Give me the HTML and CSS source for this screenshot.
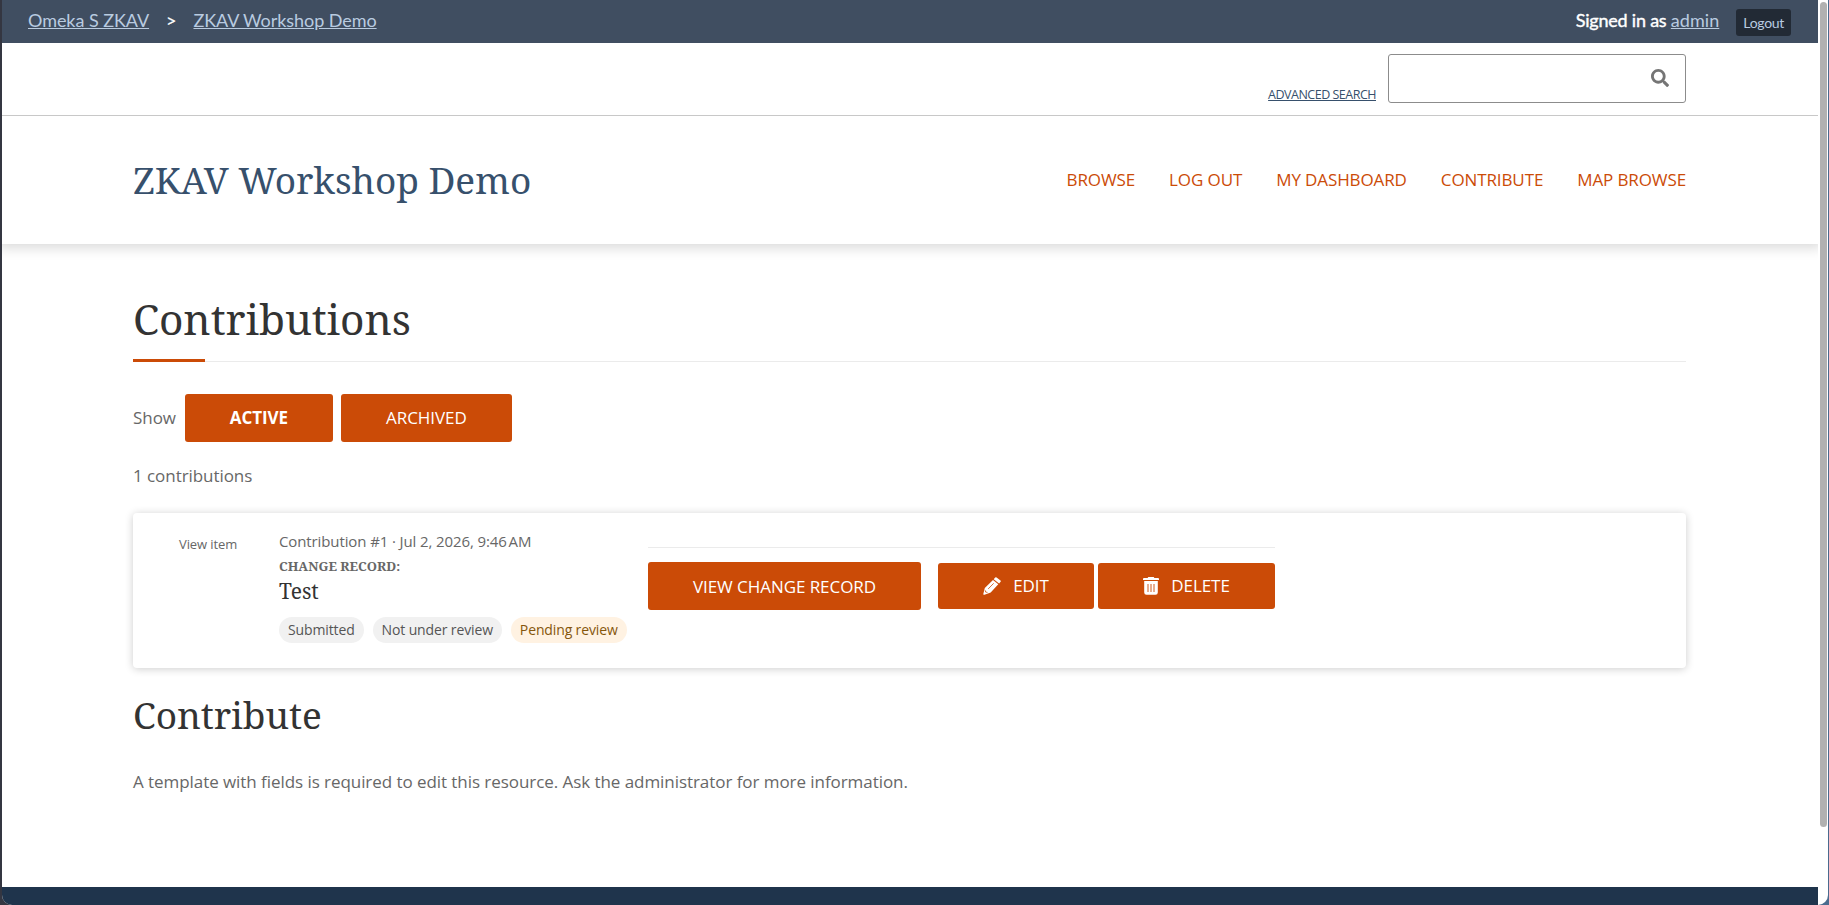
FILE: index.html
```html
<!DOCTYPE html>
<html lang="en">
<head>
  <meta charset="UTF-8">
  <meta name="viewport" content="width=device-width, initial-scale=1.0">
  <title>Contributions · ZKAV Workshop Demo</title>
  <link rel="stylesheet" href="styles.css">
</head>
<body>
<div class="window">
  <div class="page">
    <div class="user-bar">
      <nav class="breadcrumbs">
        <a href="#">Omeka S ZKAV</a>
        <span class="separator">&gt;</span>
        <a href="#">ZKAV Workshop Demo</a>
      </nav>
      <div class="user">
        <span class="signed-in">Signed in as <a href="#">admin</a></span>
        <a class="logout" href="#">Logout</a>
      </div>
    </div>

    <div class="search-bar">
      <a class="advanced" href="#">Advanced search</a>
      <form class="search">
        <input type="text" aria-label="Search">
        <button type="button" aria-label="Search">
          <svg width="18" height="18" viewBox="0 0 512 512"><path fill="#757575" d="M505 442.700L405.300 343c-4.500-4.500-10.600-7-17-7H372c27.600-35.300 44-79.700 44-128C416 93.100 322.900 0 208 0S0 93.100 0 208s93.100 208 208 208c48.300 0 92.700-16.400 128-44v16.300c0 6.400 2.500 12.500 7 17l99.700 99.700c9.400 9.400 24.600 9.400 33.900 0l28.300-28.300c9.400-9.400 9.400-24.600.1-34zM208 336c-70.700 0-128-57.200-128-128 0-70.700 57.200-128 128-128 70.700 0 128 57.200 128 128 0 70.700-57.200 128-128 128z"/></svg>
        </button>
      </form>
    </div>

    <header>
      <a class="site-title" href="#">ZKAV Workshop Demo</a>
      <nav class="main-nav">
        <a href="#">Browse</a>
        <a href="#">Log out</a>
        <a href="#">My dashboard</a>
        <a href="#">Contribute</a>
        <a href="#">Map browse</a>
      </nav>
    </header>

    <main>
      <h1>Contributions</h1>

      <div class="filters">
        <span>Show</span>
        <a class="button active" href="#">Active</a>
        <a class="button archived" href="#">Archived</a>
      </div>

      <p class="count">1 contributions</p>

      <div class="card">
        <a class="view-item" href="#">View item</a>
        <div class="record">
          <div class="meta">Contribution #1 · Jul 2, 2026, 9:46&#8239;AM</div>
          <div class="label">Change record:</div>
          <div class="name">Test</div>
          <div class="tags">
            <span class="tag">Submitted</span>
            <span class="tag">Not under review</span>
            <span class="tag pending">Pending review</span>
          </div>
        </div>
        <div class="actions">
          <a class="button view" href="#">View change record</a>
          <a class="button edit" href="#">
            <svg width="18" height="18" viewBox="0 0 18 18"><path fill="#fff" d="M12.200.5q.7-.6 1.400-.1l3.900 3.100q.6.600.1 1.300l-1.500 1.700-5.400-4.300zM10 3.100l5.300 4.200-7.600 8.200-6.200 2.300q-1.200.2-1.200-.9l1.500-6z"/><path fill="none" stroke="#cb4b07" stroke-width=".8" d="M10.700 6.300l-5.500 5.600M2.200 13.300l.5 1.800 1.800.3"/></svg>
            Edit
          </a>
          <a class="button delete" href="#">
            <svg width="16" height="18" viewBox="0 0 16 18"><path fill="#fff" d="M5.300 0h5.400l.7.900H15q1 0 1 1v1H0v-1q0-1 1-1h3.600zM1.200 3.900h13.600v11.600q0 2.300-2.300 2.300h-9q-2.300 0-2.300-2.300z"/><path stroke="#cb4b07" stroke-width=".9" d="M5 7v8M8 7v8M11 7v8"/></svg>
            Delete
          </a>
        </div>
      </div>

      <h2>Contribute</h2>
      <p>A template with fields is required to edit this resource. Ask the administrator for more information.</p>
    </main>

    <footer></footer>
  </div>
  <div class="scrollbar"><div class="thumb"></div></div>
</div>
</body>
</html>
```
FILE: styles.css
```css
* {
  box-sizing: border-box;
}
html, body {
  margin: 0;
  padding: 0;
  height: 100%;
}
body {
  background: linear-gradient(to right, #343641 50%, #4a6b8e 50%);
  font-family: "Open Sans", sans-serif;
  font-size: 17px;
  line-height: 24px;
  letter-spacing: -.06px;
  color: #676767;
  overflow: hidden;
}
a {
  color: inherit;
}
.window {
  display: flex;
  height: 905px;
  margin: 0 1px 0 2px;
  background: #fff;
  border-radius: 0 0 10px 10px;
  overflow: hidden;
}
.page {
  flex: 1;
  display: flex;
  flex-direction: column;
}
.scrollbar {
  width: 10px;
  padding: 2px 1px 0 2px;
}
.thumb {
  width: 7px;
  height: 825px;
  border-radius: 4px;
  background: #b1b1b1;
}

.user-bar {
  display: flex;
  justify-content: space-between;
  align-items: flex-start;
  height: 43px;
  padding: 8px 27px 0 26px;
  background: #404e61;
  color: #fff;
  font-family: Lato, sans-serif;
  font-size: 18px;
}
.user-bar a {
  color: #b9cbe0;
}
.breadcrumbs {
  display: flex;
}
.separator {
  margin: 0 17px;
  -webkit-text-stroke: .2px;
}
.user {
  display: flex;
  align-items: flex-start;
  gap: 17px;
}
.signed-in {
  letter-spacing: -.22px;
  -webkit-text-stroke: .4px;
}
.signed-in a {
  letter-spacing: .05px;
  -webkit-text-stroke: 0;
}
.user .logout {
  margin-top: 1px;
  padding: 0 7px;
  line-height: 27px;
  letter-spacing: -.3px;
  border-radius: 3px;
  background: #222a35;
  font-size: 14px;
  text-decoration: none;
}

.search-bar {
  display: flex;
  justify-content: flex-end;
  align-items: flex-end;
  height: 73px;
  padding: 0 132px 12px 0;
  border-bottom: 1px solid #c8c8c8;
}
.advanced {
  margin-right: 12px;
  font-size: 12.500px;
  line-height: 16px;
  letter-spacing: -.5px;
  text-transform: uppercase;
  color: #37506c;
}
.search {
  display: flex;
  width: 298px;
  height: 49px;
  border: 1px solid #8c8c8c;
  border-radius: 3px;
}
.search input {
  flex: 1;
  min-width: 0;
  border: 0;
  background: none;
}
.search button {
  display: flex;
  align-items: center;
  width: 34px;
  padding: 0 0 1px;
  border: 0;
  background: none;
}

header {
  display: flex;
  justify-content: space-between;
  align-items: center;
  height: 128px;
  padding: 0 132px 0 131px;
  box-shadow: 0 0 12px 4px rgba(0, 0, 0, .15);
  clip-path: inset(0 0 -20px 0);
}
.site-title {
  font-family: "Noto Serif", "Liberation Serif", serif;
  font-size: 37px;
  line-height: 50px;
  color: #37506c;
  text-decoration: none;
}
.main-nav {
  display: flex;
  gap: 34px;
  letter-spacing: -.11px;
}
.main-nav a {
  color: #cb4b07;
  text-transform: uppercase;
  text-decoration: none;
}

main {
  flex: 1;
  padding: 45px 132px 0 131px;
}
h1, h2 {
  margin: 0;
  font-family: "Noto Serif", "Liberation Serif", serif;
  font-weight: normal;
  color: #333;
}
h1 {
  height: 73px;
  border-bottom: 1px solid #ebebeb;
  font-size: 42.400px;
  line-height: 59px;
}
h1::after {
  content: "";
  display: block;
  width: 72px;
  height: 3px;
  margin-top: 11px;
  background: #cb4b07;
}
.filters {
  display: flex;
  align-items: center;
  margin-top: 32px;
}
.button {
  display: flex;
  align-items: center;
  justify-content: center;
  height: 48px;
  border-radius: 3px;
  background: #cb4b07;
  color: #fff;
  text-transform: uppercase;
  text-decoration: none;
}
.active {
  width: 148px;
  margin: 0 8px 0 9px;
  font-weight: bold;
}
.archived {
  width: 171px;
}
.count {
  margin: 22px 0 25px;
}

.card {
  display: flex;
  height: 155px;
  padding-left: 46px;
  border-radius: 4px;
  box-shadow: 0 1px 8px rgba(0, 0, 0, .2);
}
.view-item {
  width: 100px;
  margin-top: 19px;
  font-size: 13px;
  letter-spacing: -.1px;
  text-decoration: none;
}
.record {
  width: 369px;
  padding-top: 16px;
}
.meta {
  font-size: 15px;
  letter-spacing: -.11px;
}
.label {
  padding-top: 1px;
  font-family: "Noto Serif", "Liberation Serif", serif;
  font-size: 13px;
  font-weight: bold;
  text-transform: uppercase;
  letter-spacing: 0;
}
.name {
  font-family: "Noto Serif", "Liberation Serif", serif;
  font-size: 21px;
  line-height: 26px;
  color: #333;
}
.tags {
  display: flex;
  gap: 9px;
  margin-top: 13px;
}
.tag {
  padding: 0 9px;
  border-radius: 13px;
  background: #f1f1f1;
  color: #555;
  font-size: 14px;
  line-height: 26px;
  letter-spacing: -.13px;
  white-space: nowrap;
}
.pending {
  background: #fff2e2;
  color: #85560c;
}
.actions {
  display: flex;
  align-items: center;
  width: 627px;
  height: 63px;
  margin-top: 34px;
  padding-top: 14px;
  border-top: 1px solid #ebebeb;
}
.view {
  width: 273px;
  margin-right: 17px;
  padding-top: 1px;
}
.edit, .delete {
  gap: 12px;
  height: 46px;
}
.edit {
  width: 156px;
  margin-right: 4px;
}
.delete {
  width: 177px;
}

h2 {
  margin: 22px 0 30px;
  font-size: 37px;
  line-height: 50px;
}
p {
  margin: 0;
}
footer {
  height: 18px;
  background: #1f344c;
}
```
